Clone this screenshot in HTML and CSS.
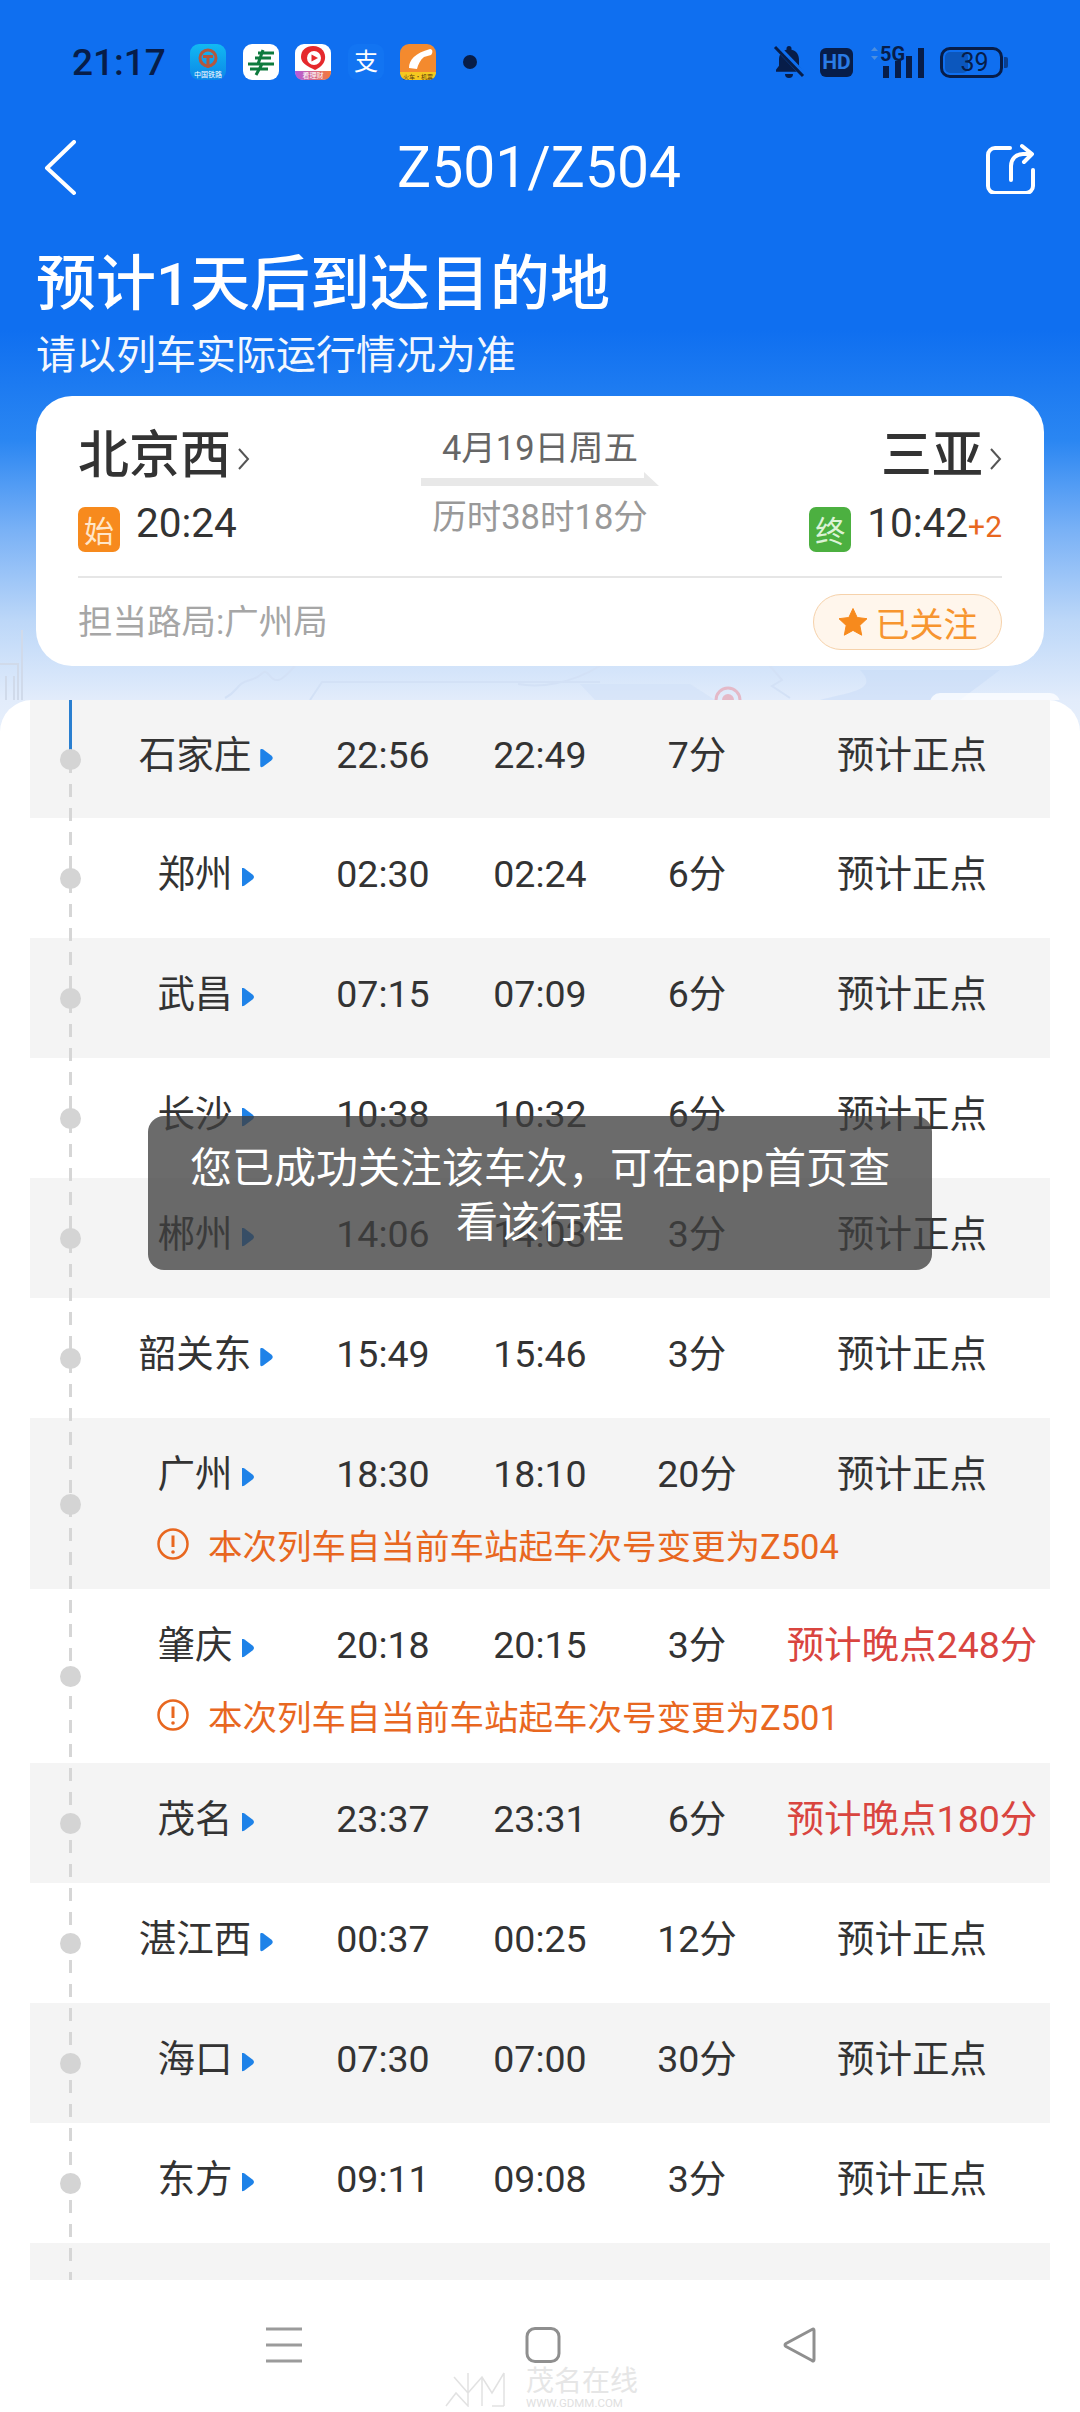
FILE: index.html
```html
<!DOCTYPE html>
<html lang="zh-CN">
<head>
<meta charset="utf-8">
<title>Z501/Z504</title>
<link rel="stylesheet" href="styles.css">
</head>
<body>
<div class="page">
  <header class="hero">
    <svg class="map" viewBox="0 0 1080 100" width="1080" height="100" aria-hidden="true">
      <g fill="none" stroke="#d0daea" stroke-width="2">
        <path d="M0 64H18V100M6 76V100M14 76V100M22 30V100"/>
      </g>
      <g fill="none" stroke="#d3e1f6" stroke-width="2">
        <path d="M225 98C240 90 235 84 250 80S262 66 270 76 285 76 295 66"/>
        <path d="M310 100L322 82H600"/>
        <path d="M770 66L782 80 772 86 790 98"/>
        <path d="M600 66C570 84 540 88 518 84"/>
      </g>
      <path d="M580 84H690L715 100H595Z" fill="#cfe0f7" opacity=".5"/>
      <path d="M820 100C850 92 880 90 860 70H1000L960 100Z" fill="#c5d9f6" opacity=".45"/>
      <circle cx="728" cy="100" r="12" fill="none" stroke="#e4b9c8" stroke-width="3"/>
      <circle cx="728" cy="100" r="6" fill="#e4b9c8"/>
      <rect x="930" y="93" width="130" height="20" rx="10" fill="#fff" opacity=".75"/>
    </svg>

    <div class="status">
      <span class="clock">21:17</span>
      <div class="apps">
        <svg class="app" viewBox="0 0 36 36">
          <defs><linearGradient id="rail" x1="0" y1="0" x2="0" y2="1"><stop offset="0" stop-color="#12b9f2"/><stop offset="1" stop-color="#0b86e8"/></linearGradient></defs>
          <rect width="36" height="36" rx="9" fill="url(#rail)"/>
          <circle cx="18" cy="14" r="8" fill="none" stroke="#b4573f" stroke-width="3"/>
          <path d="M13 11H23V14H19.500V24H16.500V14H13Z" fill="#b4573f"/>
          <text class="tiny" x="18" y="33" text-anchor="middle" fill="#fff">中国铁路</text>
        </svg>
        <svg class="app" viewBox="0 0 36 36">
          <rect width="36" height="36" rx="9" fill="#fff"/>
          <path d="M15 9H31M12 14H28M5 20H31M7 25H25M20 6L15 20M19 20L13 31" fill="none" stroke="#0e7a3e" stroke-width="3"/>
        </svg>
        <svg class="app" viewBox="0 0 36 36">
          <defs><linearGradient id="band" x1="0" y1="0" x2="1" y2="0"><stop offset="0" stop-color="#b15ae0"/><stop offset="1" stop-color="#f5793a"/></linearGradient></defs>
          <rect width="36" height="36" rx="9" fill="#fff"/>
          <path d="M18 2C27 2 31 9 30 15 29 21 24 24 20 26 12 22 6 19 6 13 6 6 11 2 18 2Z" fill="#e5282c"/>
          <circle cx="19" cy="14" r="7" fill="#fff"/>
          <path d="M16.500 10.500L23 14 16.500 17.500Z" fill="#e5282c"/>
          <path d="M0 27H36C36 33 33 36 27 36H9C3 36 0 33 0 27Z" fill="url(#band)"/>
          <text class="tiny" x="18" y="34" text-anchor="middle" fill="#fff">看理财</text>
        </svg>
        <svg class="app" viewBox="0 0 36 36">
          <rect width="36" height="36" rx="9" fill="#1274f2"/>
          <text class="glyph" x="18" y="26" text-anchor="middle" fill="#fff">支</text>
        </svg>
        <svg class="app" viewBox="0 0 36 36">
          <rect width="36" height="36" rx="9" fill="#f48a2e"/>
          <path d="M9 24C9 16 15 9 30 5 33 5 33 9 31 11L24 13C20 16 18 21 17 25Z" fill="#fff"/>
          <path d="M0 28H36C36 33 33 36 27 36H9C3 36 0 33 0 28Z" fill="#f5c81f"/>
          <text class="tiny tiny-dark" x="18" y="34.500" text-anchor="middle">火车·机票</text>
        </svg>
      </div>
      <span class="notify-dot"></span>
      <div class="sys">
        <svg class="bell" viewBox="0 0 32 34" width="32" height="34">
          <path d="M16 1a2.500 2.500 0 0 1 2.500 2.500v1.200c5 1.200 7.500 5 7.500 10v6l3 4v2H3v-2l3-4v-6c0-5 2.500-8.800 7.500-10V3.500A2.500 2.500 0 0 1 16 1z" fill="#071d49"/>
          <path d="M12 29h8a4 4 0 0 1-8 0z" fill="#071d49"/>
          <path d="M3 1L31 30" stroke="#0f6ff0" stroke-width="6"/>
          <path d="M2 2L30 31" stroke="#071d49" stroke-width="3"/>
        </svg>
        <span class="hd">HD</span>
        <svg class="signal" viewBox="0 0 58 34" width="58" height="34">
          <path d="M4 6L7.500 2 11 6ZM4 11L7.500 15 11 11Z" fill="#4c8fe0"/>
          <text class="five-g" x="13" y="16">5G</text>
          <rect x="16" y="21" width="6" height="12" fill="#071d49"/>
          <rect x="28" y="16" width="6" height="17" fill="#071d49"/>
          <rect x="39" y="11" width="6" height="22" fill="#071d49"/>
          <rect x="51" y="3" width="6" height="30" fill="#071d49"/>
        </svg>
        <div class="battery"><span class="battery-fill"></span><span class="battery-num">39</span></div>
        <span class="battery-nub"></span>
      </div>
    </div>

    <nav class="topbar">
      <svg class="back" viewBox="0 0 36 56" width="36" height="56"><path d="M31 2L4 28 31 53" fill="none" stroke="#fff" stroke-width="4" stroke-linecap="round" stroke-linejoin="round"/></svg>
      <h1 class="train">Z501/Z504</h1>
      <svg class="share" viewBox="0 0 50 52" width="50" height="52"><path d="M25 6H10a7 7 0 0 0-7 7v31a7 7 0 0 0 7 7h31a7 7 0 0 0 7-7V28" fill="none" stroke="#fff" stroke-width="4" stroke-linecap="round"/><path d="M26 38V24c0-7 5-12 12-12h8M37 4l10 8-8 8" fill="none" stroke="#fff" stroke-width="4" stroke-linecap="round" stroke-linejoin="round"/></svg>
    </nav>

    <h2 class="eta">预计1天后到达目的地</h2>
    <p class="eta-note">请以列车实际运行情况为准</p>

    <section class="card">
      <div class="trip">
        <div class="end">
          <div class="city">北京西<svg class="chev" viewBox="0 0 14 28" width="14" height="28"><path d="M2 4L11 14 2 24" fill="none" stroke="#555" stroke-width="2"/></svg></div>
          <div class="when"><span class="tag tag-start">始</span><span class="hour">20:24</span></div>
        </div>
        <div class="mid">
          <div class="date">4月19日周五</div>
          <svg class="arrow" viewBox="0 0 238 14" width="238" height="14"><path d="M0 6H223V0L238 14H0Z" fill="#e8e8e8"/></svg>
          <div class="dur">历时38时18分</div>
        </div>
        <div class="end end-right">
          <div class="city">三亚<svg class="chev" viewBox="0 0 14 28" width="14" height="28"><path d="M2 4L11 14 2 24" fill="none" stroke="#555" stroke-width="2"/></svg></div>
          <div class="when"><span class="tag tag-end">终</span><span class="hour">10:42<small class="plus">+2</small></span></div>
        </div>
      </div>
      <div class="card-foot">
        <span class="bureau">担当路局:广州局</span>
        <span class="follow"><svg viewBox="0 0 30 30" width="30" height="30"><path d="M15 1.500L19.200 10.500 29 11.700 21.800 18.400 23.700 28.200 15 23.400 6.300 28.200 8.200 18.400 1 11.700 10.800 10.500Z" fill="#f78a1d" stroke="#f78a1d" stroke-linejoin="round"/></svg>已关注</span>
      </div>
    </section>
  </header>

  <main class="sheet">
    <div class="stops">
      <div class="row row-first"><div class="line"><span class="name">石家庄<i class="tri"></i></span><span>22:56</span><span>22:49</span><span>7分</span><span>预计正点</span></div></div>
      <div class="row"><div class="line"><span class="name">郑州<i class="tri"></i></span><span>02:30</span><span>02:24</span><span>6分</span><span>预计正点</span></div></div>
      <div class="row"><div class="line"><span class="name">武昌<i class="tri"></i></span><span>07:15</span><span>07:09</span><span>6分</span><span>预计正点</span></div></div>
      <div class="row"><div class="line"><span class="name">长沙<i class="tri"></i></span><span>10:38</span><span>10:32</span><span>6分</span><span>预计正点</span></div></div>
      <div class="row"><div class="line"><span class="name">郴州<i class="tri"></i></span><span>14:06</span><span>14:03</span><span>3分</span><span>预计正点</span></div></div>
      <div class="row"><div class="line"><span class="name">韶关东<i class="tri"></i></span><span>15:49</span><span>15:46</span><span>3分</span><span>预计正点</span></div></div>
      <div class="row row-note"><div class="line"><span class="name">广州<i class="tri"></i></span><span>18:30</span><span>18:10</span><span>20分</span><span>预计正点</span></div>
        <div class="note"><svg viewBox="0 0 32 34" width="32" height="34"><circle cx="16" cy="17" r="14.500" fill="none" stroke="#e8671f" stroke-width="2.500"/><path d="M16 8.500V20" stroke="#e8671f" stroke-width="3"/><circle cx="16" cy="25" r="1.800" fill="#e8671f"/></svg>本次列车自当前车站起车次号变更为Z504</div></div>
      <div class="row row-note row-note-tall"><div class="line"><span class="name">肇庆<i class="tri"></i></span><span>20:18</span><span>20:15</span><span>3分</span><span class="late">预计晚点248分</span></div>
        <div class="note"><svg viewBox="0 0 32 34" width="32" height="34"><circle cx="16" cy="17" r="14.500" fill="none" stroke="#e8671f" stroke-width="2.500"/><path d="M16 8.500V20" stroke="#e8671f" stroke-width="3"/><circle cx="16" cy="25" r="1.800" fill="#e8671f"/></svg>本次列车自当前车站起车次号变更为Z501</div></div>
      <div class="row"><div class="line"><span class="name">茂名<i class="tri"></i></span><span>23:37</span><span>23:31</span><span>6分</span><span class="late">预计晚点180分</span></div></div>
      <div class="row"><div class="line"><span class="name">湛江西<i class="tri"></i></span><span>00:37</span><span>00:25</span><span>12分</span><span>预计正点</span></div></div>
      <div class="row"><div class="line"><span class="name">海口<i class="tri"></i></span><span>07:30</span><span>07:00</span><span>30分</span><span>预计正点</span></div></div>
      <div class="row"><div class="line"><span class="name">东方<i class="tri"></i></span><span>09:11</span><span>09:08</span><span>3分</span><span>预计正点</span></div></div>
      <div class="row row-empty"></div>
    </div>
  </main>

  <footer class="navbar">
    <svg viewBox="0 0 36 36" width="36" height="36"><path d="M0 2H36M0 18H36M0 34H36" stroke="#9b9b9b" stroke-width="3"/></svg>
    <svg viewBox="0 0 36 36" width="36" height="36"><rect x="2" y="1.500" width="32" height="33" rx="8" fill="none" stroke="#8f8f8f" stroke-width="3"/></svg>
    <svg class="nav-back" viewBox="0 0 36 36" width="36" height="36"><path d="M32 3.500V32.500Q32 35 30 33.500L4 19.500Q2 18 4 16.500L30 2.500Q32 1 32 3.500Z" fill="none" stroke="#8f8f8f" stroke-width="3" stroke-linejoin="round"/></svg>
    <div class="mark">
      <svg viewBox="0 0 70 38" width="70" height="38"><path d="M2 37L12 24 24 37V4M24 24L38 8 48 24 60 4M38 37V8M60 37V4M48 37H60M10 8L24 24" fill="none" stroke="#e2e2e2" stroke-width="1.500"/></svg>
      <div class="mark-text"><span class="mark-cn">茂名在线</span><span class="mark-en">WWW.GDMM.COM</span></div>
    </div>
  </footer>

  <div class="toast">您已成功关注该车次，可在app首页查看该行程</div>
</div>
</body>
</html>
```

FILE: styles.css
```css
* { box-sizing: border-box; }
html, body { margin: 0; padding: 0; }
body {
  width: 1080px;
  height: 2412px;
  overflow: hidden;
  font-family: Roboto, "Noto Sans CJK SC", sans-serif;
  color: #333;
}
.page {
  position: relative;
  width: 1080px;
  height: 2412px;
  display: flex;
  flex-direction: column;
  overflow: hidden;
  background: linear-gradient(180deg, #0f6ff0 0, #0f6ff0 330px, #2a86f2 440px, #79b1f6 530px, #bcd7f8 620px, #e2ecfb 700px, #e8f0fb 740px) no-repeat;
  background-size: 100% 740px;
}

/* hero */
.hero { position: relative; height: 700px; flex: none; }
.map { position: absolute; left: 0; top: 600px; }

.status {
  position: relative;
  height: 124px;
  display: flex;
  align-items: center;
  padding: 0 72px;
  color: #071d49;
}
.clock { font-size: 37px; font-weight: 500; width: 118px; }
.apps { display: flex; gap: 16.500px; }
.app { width: 36px; height: 36px; display: block; }
.tiny { font-size: 7px; font-family: "Noto Sans CJK SC", sans-serif; }
.tiny-dark { fill: #5a3a10; font-size: 6px; }
.glyph { font-size: 24px; font-family: "Noto Sans CJK SC", sans-serif; }
.notify-dot { width: 14px; height: 14px; border-radius: 50%; background: #071d49; margin-left: 27px; }
.sys { margin-left: auto; display: flex; align-items: center; }
.bell { display: block; margin-right: 15px; }
.hd {
  width: 33px; height: 29px; border-radius: 6px;
  background: #071d49; color: #2a7ce6;
  font-size: 21px; font-weight: 700; line-height: 29px; text-align: center;
  margin-right: 14px;
}
.signal { display: block; margin-right: 15px; overflow: visible; }
.five-g { font: 700 20px/1 Roboto, sans-serif; fill: #071d49; }
.battery {
  position: relative;
  width: 63px; height: 31px;
  border: 3px solid #071d49; border-radius: 10px;
  display: flex; align-items: center; justify-content: center;
  overflow: hidden;
}
.battery-fill { position: absolute; left: 2px; top: 2px; bottom: 2px; width: 40%; background: #0c57bd; border-radius: 5px; }
.battery-num { position: relative; font-size: 25px; line-height: 1; color: #071d49; margin-left: 6px; }
.battery-nub { width: 4px; height: 11px; background: #0a3f8f; margin-left: 1px; border-radius: 0 2px 2px 0; }

.topbar {
  position: relative;
  height: 88px;
  display: grid;
  grid-template-columns: 1fr auto 1fr;
  align-items: center;
  padding: 0 45px 0 43px;
}
.train { margin: 0; font-size: 57px; font-weight: 400; color: #fff; line-height: 88px; }
.back { display: block; margin-top: -1px; }
.share { display: block; justify-self: end; }

.eta {
  position: relative;
  margin: 35px 0 0 36px;
  font-size: 60px; line-height: 76px; font-weight: 500; color: #fff;
}
.eta-note {
  position: relative;
  margin: 5px 0 0 36px;
  font-size: 40px; line-height: 56px; color: #fff; opacity: .95;
}

/* card */
.card {
  position: relative;
  margin: 12px 36px 0;
  height: 270px;
  padding: 30px 42px 0;
  background: #fff;
  border-radius: 36px;
}
.trip { display: grid; grid-template-columns: 1fr auto 1fr; height: 146px; margin-bottom: 4px; }
.end { display: flex; flex-direction: column; }
.end-right { align-items: flex-end; }
.city { display: flex; align-items: center; font-size: 51px; line-height: 60px; height: 60px; font-weight: 500; color: #333; }
.chev { margin-left: 6px; margin-top: 6px; margin-right: -1px; }
.when { display: flex; margin-top: 21px; }
.tag {
  width: 42px; height: 45px; border-radius: 7px;
  color: #fff; font-size: 30px; line-height: 45px; text-align: center;
  font-family: "Noto Sans CJK SC", sans-serif;
}
.tag-start { background: #f78a1d; color: #ffe6c9; }
.tag-end { background: #4cb040; color: #dcf3d6; }
.hour { font-size: 40.500px; line-height: 32px; margin-left: 16px; color: #333; white-space: nowrap; }
.plus { font-size: 30px; color: #e8671f; }
.mid { display: flex; flex-direction: column; align-items: center; text-align: center; }
.date { font-size: 34.500px; line-height: 44px; height: 44px; color: #666; }
.arrow { margin-top: 2px; display: block; }
.dur { font-size: 34.500px; line-height: 62px; height: 62px; color: #999; }
.card-foot {
  border-top: 2px solid #e6e6e6;
  height: 90px;
  margin-top: 0;
  display: flex; align-items: center; justify-content: space-between;
}
.bureau { font-size: 34.500px; line-height: 40px; height: 40px; margin-top: -1px; color: #a6a6a6; }
.follow {
  width: 189px; height: 56px;
  display: flex; align-items: center; justify-content: center; gap: 8px;
  background: #fff6ec; border: 1.500px solid #f6d2ab; border-radius: 28px;
  font-size: 34px; color: #f7952f;
}

/* stops */
.sheet {
  flex: none;
  height: 1580px;
  background: #fff;
  border-radius: 32px 32px 0 0;
  padding: 0 30px;
  overflow: hidden;
}
.stops { position: relative; }
.stops::before {
  content: "";
  position: absolute; left: 39px; top: 60px; bottom: 0; width: 2.500px; z-index: 1;
  background: repeating-linear-gradient(180deg, #d6d6d6 0, #d6d6d6 13px, transparent 13px, transparent 24px);
}
.row { position: relative; height: 120px; background: #fff; font-size: 37.500px; color: #333; }
.row:nth-child(odd) { background: #f4f4f4; }
.row::before {
  content: "";
  position: absolute; left: 30px; top: 50%; width: 21px; height: 21px; margin-top: -10px;
  border-radius: 50%; background: #d4d4d4; z-index: 2;
}
.row-empty::before { display: none; }
.row-first { height: 118px; }
.row-first::after {
  content: "";
  position: absolute; left: 39px; top: 0; width: 3px; height: 50px; background: #2a7fd0; z-index: 1;
}
.row-note { height: 171px; }
.row-note-tall { height: 174px; }
.line {
  height: 112px;
  display: grid;
  grid-template-columns: 188px 166px 148px 166px 264px;
  align-items: center;
  justify-items: center;
  padding-left: 82px;
  white-space: nowrap;
  line-height: 38px;
}
.line > span { height: 38px; }
.row-first .line { height: 110px; }
.name { display: flex; align-items: center; }
.tri {
  width: 13px; height: 19px; margin-left: 9px; margin-top: 6px;
  background: #1e82e8;
  clip-path: path("M0 2Q0 -1 3 1L11 7Q14 9.500 11 12L3 18Q0 20 0 17Z");
}
.late { color: #d9453f; }
.note {
  display: flex; align-items: center;
  height: 34px; margin: -3px 0 0 127px;
  font-size: 34.500px; color: #e8671f; white-space: nowrap;
}
.note svg { margin-right: 19px; flex: none; }

/* bottom nav */
.navbar {
  position: relative;
  flex: none;
  height: 132px;
  background: #fff;
  display: flex;
  align-items: flex-start;
  gap: 223px;
  padding: 47px 0 0 266px;
}
.navbar > svg { display: block; flex: none; }
.nav-back { margin-left: -2px; }
.mark {
  position: absolute; left: 444px; top: 89px;
  display: flex; gap: 12px; align-items: flex-start;
}
.mark-text { display: flex; flex-direction: column; margin-top: -2px; }
.mark-cn { font-size: 28px; line-height: 30px; color: #e6e6e6; }
.mark-en { font-size: 11.500px; line-height: 12px; color: #e0e0e0; }

/* toast */
.toast {
  position: absolute; left: 148px; top: 1116px;
  width: 784px; height: 154px;
  padding: 6px 40px 0;
  display: flex; align-items: center; justify-content: center;
  text-align: center;
  background: rgba(63, 63, 63, .77);
  border-radius: 16px;
  color: #fff;
  font-size: 42px; line-height: 54px;
  z-index: 5;
}
```
